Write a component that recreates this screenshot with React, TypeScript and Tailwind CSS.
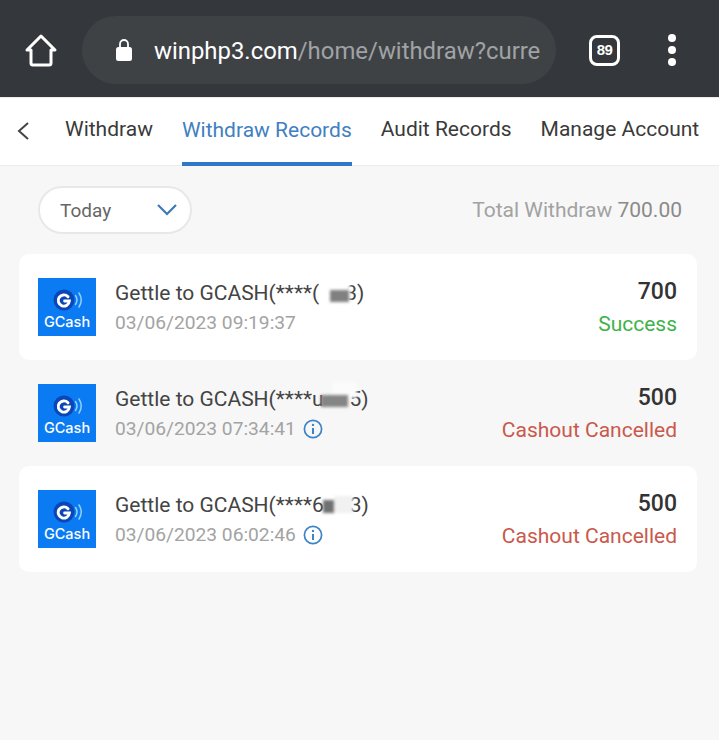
import React from 'react';

const records = [
  {
    time: '03/06/2023 09:19:37',
    amount: '700',
    status: 'Success',
    ok: true,
    info: false,
    card: 'bg-white',
    masked: '(',
    last: '3)',
    patchA: 'left-[205px] top-[3px] w-[30px] h-[20px] bg-white',
    patchB: 'left-[215px] top-[11px] w-[19px] h-[12px] bg-[#808080]',
  },
  {
    time: '03/06/2023 07:34:41',
    amount: '500',
    status: 'Cashout Cancelled',
    ok: false,
    info: true,
    card: 'bg-transparent',
    masked: 'u',
    last: '5)',
    patchA: 'left-[218px] top-[-3px] w-[24px] h-[16px] bg-[#fbfbfb]',
    patchB: 'left-[206px] top-[10px] w-[27px] h-[12px] bg-[#858585]',
  },
  {
    time: '03/06/2023 06:02:46',
    amount: '500',
    status: 'Cashout Cancelled',
    ok: false,
    info: true,
    card: 'bg-white',
    masked: '6',
    last: '3)',
    patchA: 'left-[219px] top-[5px] w-[19px] h-[17px] bg-[#f1f1f1]',
    patchB: 'left-[208px] top-[9px] w-[11px] h-[13px] bg-[#707070]',
  },
];

const GCashLogo = () => (
  <div className="w-[58px] h-[58px] bg-[#0a7bf2] flex flex-col items-center shrink-0">
    <svg width="58" height="34" viewBox="0 0 58 34" fill="none">
      <circle cx="26" cy="22" r="10.5" fill="#0b46b8" />
      <path d="M30 18.8A5.6 5.6 0 1 0 31.4 23h-4.8" stroke="#fff" strokeWidth="2.9" strokeLinecap="round" />
      <path d="M37.5 17.5a8 8 0 0 1 0 9" stroke="#8fd0ff" strokeWidth="1.5" strokeLinecap="round" />
      <path d="M41 15a13 13 0 0 1 0 14" stroke="#8fd0ff" strokeWidth="1.5" strokeLinecap="round" />
    </svg>
    <span className="text-white text-[14.5px] leading-[16px] font-medium font-['Inter',_sans-serif] mt-[2px]">GCash</span>
  </div>
);

const InfoIcon = () => (
  <svg width="20" height="20" viewBox="0 0 20 20" fill="none" className="ml-[7px] shrink-0">
    <circle cx="10" cy="10" r="8.6" stroke="#3d84c6" strokeWidth="1.7" />
    <circle cx="10" cy="5.9" r="1.2" fill="#3d84c6" />
    <path d="M10 9v6" stroke="#3d84c6" strokeWidth="2" />
  </svg>
);

const RecordCard = ({ time, amount, status, ok, info, card, masked, last, patchA, patchB }: (typeof records)[number]) => (
  <div className={`h-[106px] rounded-[10px] flex items-center pl-[19px] pr-[20px] ${card}`}>
    <GCashLogo />
    <div className="ml-[19px] flex-1">
      <div className="relative text-[21px] leading-[28px] text-[#444] w-fit whitespace-nowrap -mt-[1px]">
        Gettle to GCASH(****{masked}
        <span className="ml-[26px]">{last}</span>
        <div className={`absolute blur-[1.5px] ${patchA}`} />
        <div className={`absolute blur-[1.5px] ${patchB}`} />
      </div>
      <div className="flex items-center mt-[4px] text-[19.2px] leading-[24px] text-[#a3a3a3]">
        {time}
        {info && <InfoIcon />}
      </div>
    </div>
    <div className="text-right">
      <div className="mt-[1px] text-[23px] leading-[30px] font-medium text-[#333]">{amount}</div>
      <div className={`mt-[3px] text-[21px] leading-[28px] ${ok ? 'text-[#3fb24a]' : 'text-[#c9594c]'}`}>{status}</div>
    </div>
  </div>
);

export default function App() {
  return (
    <div className="w-[719px] h-[740px] overflow-hidden bg-[#f7f7f7] font-['Roboto',_sans-serif]">
      <div className="h-[97px] bg-[#34373b] flex items-center">
        <svg width="34" height="34" viewBox="0 0 34 34" fill="none" className="ml-[24px] mt-[3px]">
          <path d="M3 17 17 3l14 14h-4v13a2 2 0 0 1-2 2H9a2 2 0 0 1-2-2V17H3Z" stroke="#fff" strokeWidth="3" strokeLinejoin="round" />
        </svg>
        <div className="ml-[24px] w-[474px] h-[68px] mt-[3px] rounded-full bg-[#3f4245] flex items-center pl-[33px]">
          <svg width="18" height="24" viewBox="0 0 18 24" className="shrink-0 -mt-[1px]">
            <path d="M5 10V6a4 4 0 0 1 8 0v4" fill="none" stroke="#fff" strokeWidth="1.8" />
            <rect x="1" y="9" width="16" height="14" rx="2.5" fill="#fff" />
          </svg>
          <div className="ml-[21px] mt-[3px] whitespace-nowrap text-[23.9px]">
            <span className="text-white">winphp3.com</span>
            <span className="text-[#a0a3a6]">/home/withdraw?curre</span>
          </div>
        </div>
        <div className="ml-[33px] w-[31px] h-[31px] mt-[3px] border-[3px] border-white rounded-[8px] flex items-center justify-center text-white text-[15px] tracking-[-0.5px] font-bold font-['Liberation_Sans',_sans-serif]">
          89
        </div>
        <div className="ml-[48px] flex flex-col gap-[4px] mt-[3px]">
          <div className="w-[8px] h-[8px] rounded-full bg-white" />
          <div className="w-[8px] h-[8px] rounded-full bg-white" />
          <div className="w-[8px] h-[8px] rounded-full bg-white" />
        </div>
      </div>

      <div className="h-[69px] bg-white border-t border-b border-[#ececec] flex items-stretch text-[21px] whitespace-nowrap">
        <div className="w-[65px] pl-[16px] flex items-center">
          <svg width="14" height="20" viewBox="0 0 14 20" fill="none" className="mb-[2px]">
            <path d="M12 2 3 10l9 8" stroke="#444" strokeWidth="2" />
          </svg>
        </div>
        <div className="flex items-center text-[#3a3a3a] pb-[3px]">Withdraw</div>
        <div className="ml-[29px] flex items-center text-[#3f7fc1] border-b-[4px] border-[#2f77c8] -mb-[1px] pt-[1px]">Withdraw Records</div>
        <div className="ml-[29px] flex items-center text-[#3a3a3a] pb-[3px]">Audit Records</div>
        <div className="ml-[29px] flex items-center text-[#3a3a3a] pb-[3px]">Manage Account</div>
      </div>

      <div className="h-[89px] flex items-center justify-between pl-[38px] pr-[37px]">
        <div className="w-[154px] h-[48px] bg-white rounded-full border-2 border-[#e8e8e8] flex items-center justify-between pl-[20px] pr-[12px] -mt-[2px]">
          <span className="text-[19px] text-[#666] mt-[3px]">Today</span>
          <svg width="22" height="14" viewBox="0 0 22 14" fill="none">
            <path d="m2 2 9 9 9-9" stroke="#3d79b8" strokeWidth="2.2" />
          </svg>
        </div>
        <div className="text-[21px] text-[#a2a2a2] mt-[1px]">
          Total Withdraw <span className="text-[#8a8a8a]">700.00</span>
        </div>
      </div>

      <div className="pl-[19px] pr-[22px] flex flex-col mt-[-1px]">
        {records.map((r) => (
          <RecordCard key={r.time} {...r} />
        ))}
      </div>
    </div>
  );
}
